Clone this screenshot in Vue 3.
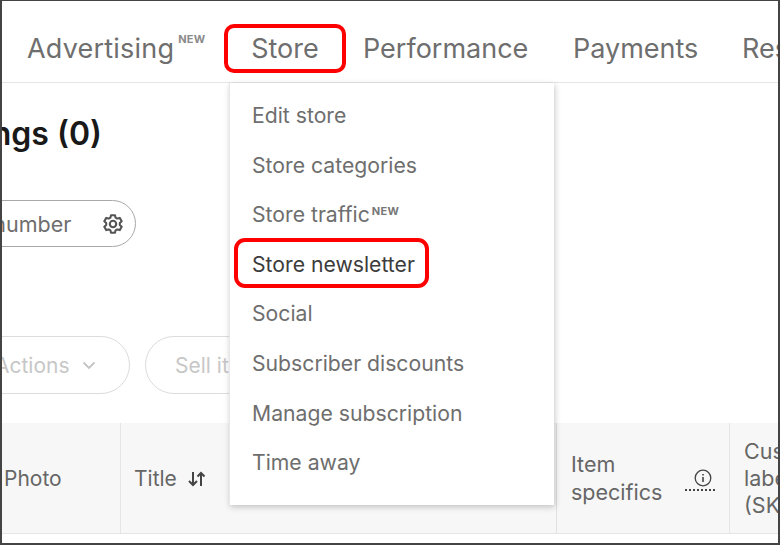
<script setup>
const menu = [
  { label: 'Edit store' },
  { label: 'Store categories' },
  { label: 'Store traffic', badge: 'NEW' },
  { label: 'Store newsletter', marked: true },
  { label: 'Social' },
  { label: 'Subscriber discounts' },
  { label: 'Manage subscription' },
  { label: 'Time away' }
]
</script>

<template>
  <div class="frame">
    <nav class="nav">
      <span class="tab adv">Advertising<sup class="new">NEW</sup></span>
      <span class="tab store">Store</span>
      <span class="tab perf">Performance</span>
      <span class="tab pay">Payments</span>
      <span class="tab res">Research</span>
    </nav>

    <h1 class="title">Listings (0)</h1>

    <div class="search">
      <span class="search-text">Item number</span>
      <svg class="gear" width="22" height="22" viewBox="0 0 22 22" fill="none" stroke="#555" stroke-width="2.100">
        <path d="M9 2.200h4l.6 2.500 1.600.9 2.500-.7 2 3.400-1.900 1.800v1.800l1.900 1.800-2 3.400-2.500-.7-1.600.9-.6 2.500H9l-.6-2.500-1.600-.9-2.500.7-2-3.400 1.900-1.800v-1.800L2.300 8.300l2-3.400 2.500.7 1.600-.9z" stroke-linejoin="round"/>
        <circle cx="11" cy="11" r="3.200"/>
      </svg>
    </div>

    <div class="actions">
      <span class="pill pill-actions">Actions
        <svg width="14" height="9" viewBox="0 0 14 9" fill="none" stroke="#c4c4c4" stroke-width="1.800"><path d="M1.500 1.500 7 7l5.500-5.500"/></svg>
      </span>
      <span class="pill pill-sell">Sell it yourself</span>
    </div>

    <div class="thead">
      <div class="col col-photo">Photo</div>
      <div class="col col-title">Title
        <svg class="sort" width="20" height="16" viewBox="0 0 20 16" fill="none" stroke="#444" stroke-width="2">
          <path d="M6 1v13M2 10l4 4 4-4M14 15V2M10.500 5.500 14 2l3.500 3.500"/>
        </svg>
      </div>
      <div class="col col-spec">
        <span class="spec-text">Item<br>specifics</span>
        <span class="info">
          <svg width="18" height="18" viewBox="0 0 18 18" fill="none" stroke="#444" stroke-width="1.300">
            <circle cx="9" cy="9" r="7.800"/>
            <path d="M9 8v5M9 5v1.500" stroke-width="1.600"/>
          </svg>
        </span>
      </div>
      <div class="col col-sku">Custom<br>label<br>(SKU)</div>
    </div>

    <div class="dropdown">
      <div v-for="item in menu" :key="item.label" class="item" :class="{ marked: item.marked }">
        <span>{{ item.label }}</span><sup v-if="item.badge" class="new small">{{ item.badge }}</sup>
      </div>
    </div>
  </div>
</template>

<style>
html, body { margin: 0; background: #fff; }
</style>

<style scoped>
.frame {
  position: relative;
  box-sizing: border-box;
  width: 780px;
  height: 545px;
  overflow: hidden;
  background: #fff;
  border: 2px solid #444;
  border-top-width: 1px;
  font-family: Inter, "Liberation Sans", sans-serif;
  color: #6e6e6e;
}
.nav {
  display: flex;
  align-items: center;
  box-sizing: border-box;
  height: 82px;
  padding: 14px 0 0 25px;
  border-bottom: 1px solid #e5e5e5;
  white-space: nowrap;
  font-size: 27px;
}
.tab { flex: none; line-height: 30px; }
.adv { width: 197px; letter-spacing: .2px; }
.new { font-size: 11px; font-weight: 700; color: #8a8a8a; vertical-align: 15px; line-height: 0; margin-left: 4px; letter-spacing: 0.3px; }
.new.small { vertical-align: 7px; margin-left: 2px; color: #777; }
.store {
  box-sizing: border-box;
  width: 122px;
  height: 49px;
  line-height: 41px;
  text-align: center;
  border: 4px solid #f00;
  border-radius: 10px;
}
.perf { margin-left: 17px; width: 210px; }
.pay { width: 169px; }

.title {
  margin: 31px 0 0 -74px;
  font-size: 32px;
  line-height: 40px;
  font-weight: 600;
  color: #191919;
  white-space: nowrap;
}
.search {
  box-sizing: border-box;
  display: flex;
  align-items: center;
  justify-content: space-between;
  width: 200px;
  height: 47px;
  margin: 46px 0 0 -66px;
  padding: 0 11px 0 0;
  border: 1.500px solid #a8a8a8;
  border-radius: 24px;
  font-size: 21.500px;
  white-space: nowrap;
}
.search-text { margin-left: 6px; }
.actions {
  display: flex;
  gap: 15px;
  margin: 89px 0 0 -70px;
}
.pill {
  box-sizing: border-box;
  display: flex;
  align-items: center;
  gap: 12px;
  height: 58px;
  flex: none;
  border: 1.500px solid #dcdcdc;
  border-radius: 29px;
  font-size: 21px;
  color: #c7c7c7;
  white-space: nowrap;
}
.pill-actions { width: 198px; padding-left: 62px; }
.pill-sell { width: 240px; padding-left: 29px; }

.thead {
  display: flex;
  height: 110px;
  margin-top: 29px;
  background: #f7f7f7;
  border-bottom: 1.500px solid #e5e5e5;
  font-size: 21.500px;
  color: #666;
}
.col { box-sizing: border-box; flex: none; display: flex; align-items: center; }
.col-photo { width: 118px; padding-left: 2px; font-size: 21px; }
.col-title { width: 436px; padding-left: 13px; gap: 10px; font-size: 21px; border-left: 1.500px solid #e5e5e5; }
.col-spec { width: 173px; padding: 0 14px; justify-content: space-between; border-left: 1.500px solid #e0e0e0; line-height: 28px; }
.col-sku { flex: 1; padding-left: 14px; border-left: 1.500px solid #e5e5e5; line-height: 27px; white-space: nowrap; }
.sort { margin-top: 1px; }
.spec-text { margin-top: -1px; }
.info {
  box-sizing: border-box;
  display: flex;
  justify-content: center;
  flex: none;
  width: 30px;
  margin-top: 4px;
  padding: 0 0 2px 6px;
  border-bottom: 2px dotted #444;
}

.dropdown {
  position: absolute;
  left: 227px;
  top: 82px;
  box-sizing: border-box;
  width: 325px;
  height: 422px;
  padding: 8px 0 0 4px;
  background: #fff;
  border-left: 1px solid #e8e8e8;
  box-shadow: 1px 2px 6px rgba(0, 0, 0, .22);
  font-size: 21.200px;
  white-space: nowrap;
}
.item {
  box-sizing: border-box;
  width: 195px;
  height: 49.600px;
  line-height: 49.600px;
  padding-left: 18px;
}
.marked {
  height: 50px;
  margin: -1.500px 0 1.100px;
  color: #3c3c3c;
  border: 4px solid #f00;
  border-radius: 11px;
  padding-left: 14px;
  line-height: 45px;
}
</style>
